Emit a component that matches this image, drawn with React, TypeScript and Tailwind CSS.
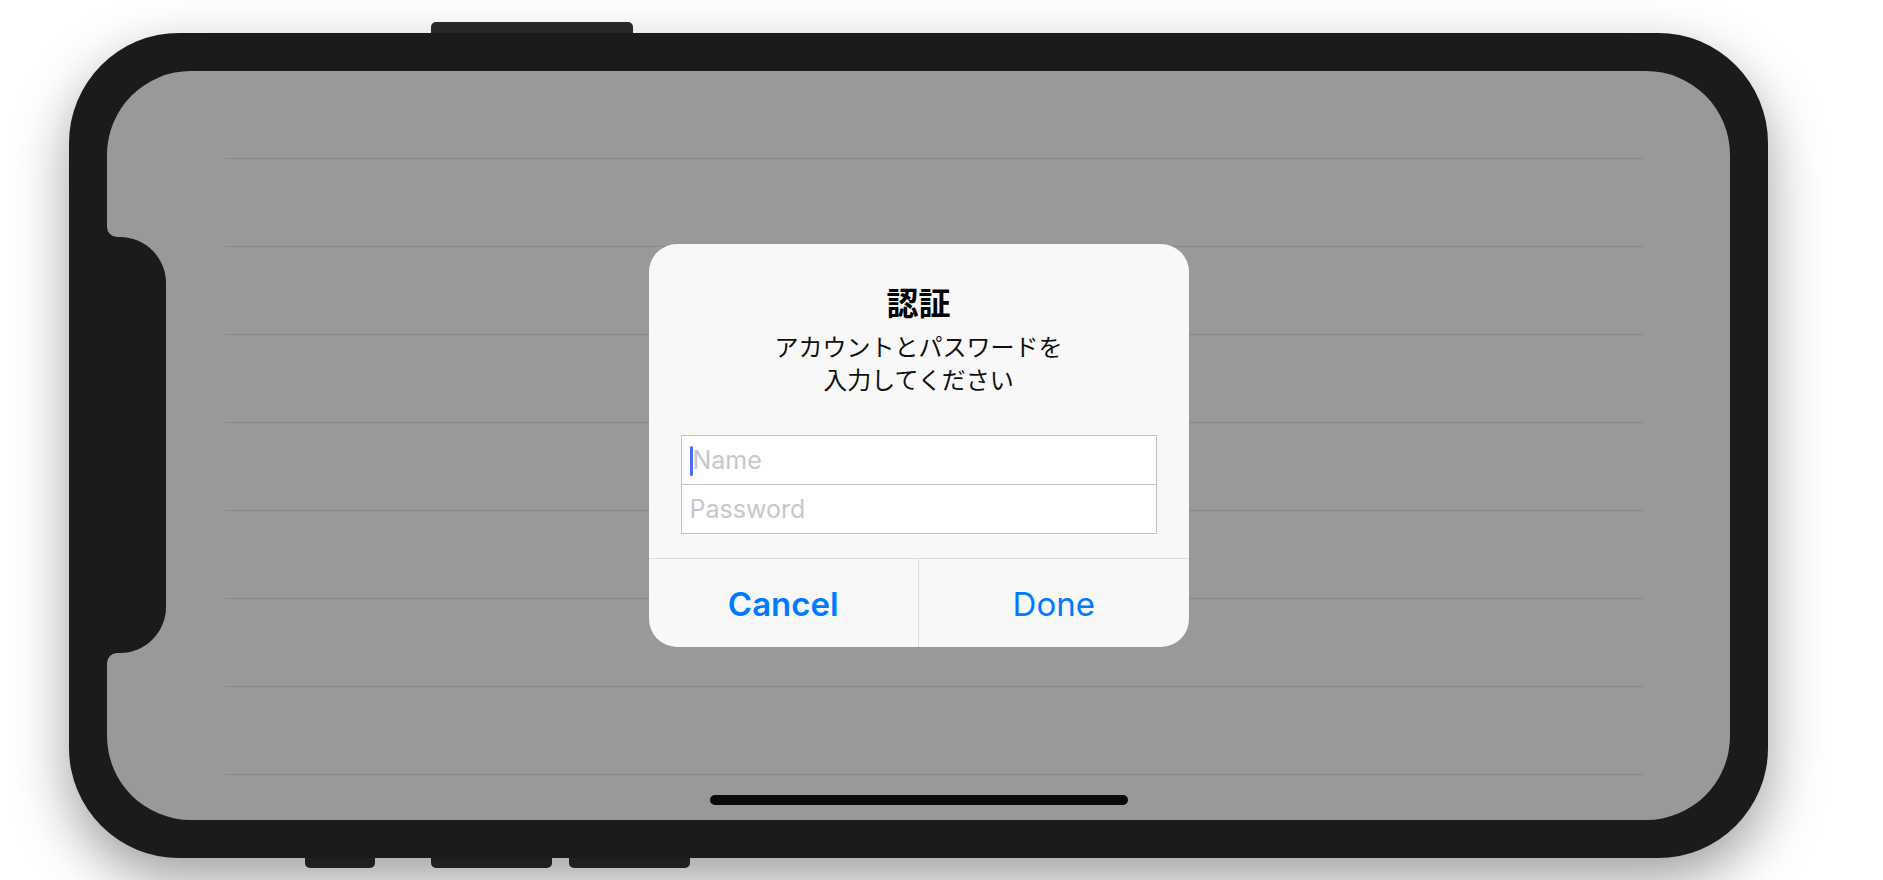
export default function App() {
  const rows = Array.from({ length: 9 })

  return (
    <div className="w-[1883px] h-[880px] overflow-hidden bg-white font-['Inter','Noto_Sans_CJK_JP',sans-serif]">
      <div className="pl-[69px] pt-[22px]">
        <div className="flex flex-col w-[1699px]">
          {/* top side button */}
          <div className="flex h-[11px]">
            <div className="ml-[362px] w-[202px] h-full rounded-t-[5px] bg-[#2b2b2b]" />
          </div>

          {/* phone body */}
          <div className="relative w-[1699px] h-[825px] rounded-[110px] bg-[#1b1b1b] p-[38px] shadow-[0_22px_55px_rgba(0,0,0,0.38)]">
            <div className="relative w-full h-full rounded-[84px] bg-[#999999] overflow-hidden">
              <div className="flex flex-col pl-[118px] pr-[87px]">
                {rows.map((_, i) => (
                  <div key={i} className="h-[88px] shrink-0 border-b border-[#888888]" />
                ))}
              </div>

              {/* sensor housing */}
              <div className="absolute left-0 top-[156px] w-[10px] h-[10px] bg-[#1b1b1b]">
                <div className="w-full h-full rounded-bl-[10px] bg-[#999999]" />
              </div>
              <div className="absolute left-0 top-[166px] w-[59px] h-[416px] rounded-r-[46px] bg-[#1b1b1b]" />
              <div className="absolute left-0 top-[582px] w-[10px] h-[10px] bg-[#1b1b1b]">
                <div className="w-full h-full rounded-tl-[10px] bg-[#999999]" />
              </div>

              {/* alert */}
              <div className="absolute inset-0 flex items-center justify-center">
                <div className="w-[540px] rounded-[28px] bg-[#f8f8f8] flex flex-col overflow-hidden">
                  <div className="flex flex-col items-center pt-[40px]">
                    <div className="text-[32px] leading-[40px] font-bold text-black">認証</div>
                    <div className="mt-[7px] text-[24px] leading-[33px] text-center text-[#111111]">
                      アカウントとパスワードを
                      <br />
                      入力してください
                    </div>
                  </div>

                  <div className="mt-[38px] mx-[32px] border border-[#c2c2c2] bg-white flex flex-col">
                    <div className="h-[49px] border-b border-[#c2c2c2] flex items-center pl-[8px] pt-[1px]">
                      <span className="w-[3px] h-[30px] rounded-full bg-[#4a6cf7]" />
                      <span className="text-[25px] text-[#c7c7cd]">Name</span>
                    </div>
                    <div className="h-[48px] flex items-center pl-[8px] pt-[1px]">
                      <span className="text-[25px] text-[#c7c7cd]">Password</span>
                    </div>
                  </div>

                  <div className="mt-[24px] h-[89px] border-t border-[#dcdcdc] flex">
                    <button className="flex-1 h-full pt-[3px] border-r border-[#dcdcdc] text-[33px] font-semibold text-[#007aff]">
                      Cancel
                    </button>
                    <button className="flex-1 h-full pt-[3px] text-[33px] text-[#007aff]">Done</button>
                  </div>
                </div>
              </div>

              {/* home indicator */}
              <div className="absolute bottom-[15px] left-1/2 -translate-x-1/2 w-[418px] h-[10px] rounded-full bg-[#0a0a0a]" />
            </div>
          </div>

          {/* bottom side buttons */}
          <div className="flex h-[10px]">
            <div className="ml-[236px] w-[70px] h-full rounded-b-[5px] bg-[#2b2b2b]" />
            <div className="ml-[56px] w-[121px] h-full rounded-b-[5px] bg-[#2b2b2b]" />
            <div className="ml-[17px] w-[121px] h-full rounded-b-[5px] bg-[#2b2b2b]" />
          </div>
        </div>
      </div>
    </div>
  )
}
